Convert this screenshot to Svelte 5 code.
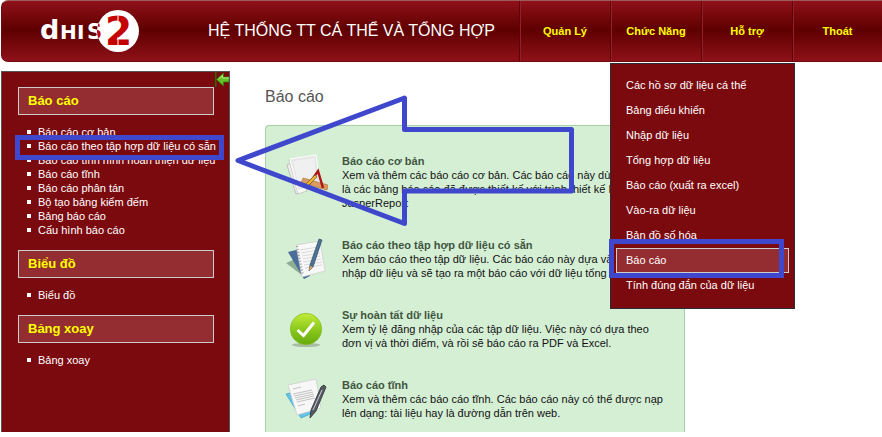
<script>
  const menu = ['Quản Lý', 'Chức Năng', 'Hỗ trợ', 'Thoát'];
  const functions = [
    'Các hồ sơ dữ liệu cá thể',
    'Bảng điểu khiển',
    'Nhập dữ liệu',
    'Tổng hợp dữ liệu',
    'Báo cáo (xuất ra excel)',
    'Vào-ra dữ liệu',
    'Bản đồ số hóa',
    'Báo cáo',
    'Tính đúng đắn của dữ liệu'
  ];
  const sections = [
    {
      title: 'Báo cáo',
      links: [
        'Báo cáo cơ bản',
        'Báo cáo theo tập hợp dữ liệu có sẵn',
        'Báo cáo tình hình hoàn thiện dữ liệu',
        'Báo cáo tĩnh',
        'Báo cáo phân tán',
        'Bộ tạo bảng kiểm đếm',
        'Bảng báo cáo',
        'Cấu hình báo cáo'
      ]
    },
    { title: 'Biểu đồ', links: ['Biểu đồ'] },
    { title: 'Bảng xoay', links: ['Bảng xoay'] }
  ];
  const reports = [
    {
      icon: 'design',
      title: 'Báo cáo cơ bản',
      lines: [
        'Xem và thêm các báo cáo cơ bản. Các báo cáo này dùng',
        'là các bảng báo cáo đã được thiết kế với trình thiết kế B',
        'JasperReport'
      ]
    },
    {
      icon: 'notebook',
      title: 'Báo cáo theo tập hợp dữ liệu có sẵn',
      lines: [
        'Xem báo cáo theo tập dữ liệu. Các báo cáo này dựa vào',
        'nhập dữ liệu và sẽ tạo ra một báo cáo với dữ liệu tổng h'
      ]
    },
    {
      icon: 'check',
      title: 'Sự hoàn tất dữ liệu',
      lines: [
        'Xem tỷ lệ đăng nhập của các tập dữ liệu. Việc này có dựa theo',
        'đơn vị và thời điểm, và rồi sẽ báo cáo ra PDF và Excel.'
      ]
    },
    {
      icon: 'document',
      title: 'Báo cáo tĩnh',
      lines: [
        'Xem và thêm các báo cáo tĩnh. Các báo cáo này có thể được nạp',
        'lên dạng: tài liệu hay là đường dẫn trên web.'
      ]
    }
  ];
</script>

<div class="page">
  <header>
    <a class="logo" href="#home" aria-label="DHIS 2">
      <svg width="104" height="48" viewBox="0 0 104 48">
        <defs>
          <clipPath id="disc"><circle cx="80" cy="24" r="21" /></clipPath>
        </defs>
        <g font-family="DejaVu Sans, sans-serif" font-weight="bold">
          <text x="2" y="32" font-size="27" fill="#fff">d</text>
          <text x="22" y="32" font-size="20" fill="#fff">H</text>
          <text x="39" y="32" font-size="20" fill="#fff">I</text>
          <text x="49" y="32" font-size="21" fill="#fff">S</text>
          <circle cx="80" cy="24" r="21" fill="#fff" />
          <text x="49" y="32" font-size="21" fill="#c00000" clip-path="url(#disc)">S</text>
          <text x="67" y="38" font-size="39" fill="#c50000">2</text>
        </g>
        <path d="M80 8v8M80 30v10" stroke="#fff" fill="none" />
      </svg>
    </a>
    <h1>HỆ THỐNG TT CÁ THỂ VÀ TỔNG HỢP</h1>
    <nav>
      {#each menu as label, i}
        <div class="tab">
          <a href="#menu">{label}</a>
          {#if i === 1}
            <ul class="dropdown">
              {#each functions as name}
                <li><a href="#function" class:active={name === 'Báo cáo'}>{name}</a></li>
              {/each}
            </ul>
          {/if}
        </div>
      {/each}
    </nav>
  </header>

  <div class="columns">
    <aside>
      <button class="collapse" aria-label="Ẩn">
        <svg width="14" height="15" viewBox="0 0 14 15">
          <path d="M.75 0v15" stroke="#2d6b00" stroke-width="1.5" />
          <path d="M1.500 7.500 8.500 1v4H14v5H8.500v4z" fill="#62c226" stroke="#2f7a08" stroke-width=".7" />
          <path d="M3.500 7 7.500 3.500V6H14" stroke="#b5ea80" fill="none" />
        </svg>
      </button>
      {#each sections as section}
        <section>
          <h2>{section.title}</h2>
          <ul>
            {#each section.links as link}
              <li><a href="#report">{link}</a></li>
            {/each}
          </ul>
        </section>
      {/each}
    </aside>

    <main>
      <h2>Báo cáo</h2>
      <div class="panel">
        {#each reports as report}
          <article>
            <svg width="42" height="42" viewBox="0 0 42 42">
              {#if report.icon === 'design'}
                <path d="m1 11 8-4 10 29-9 4z" fill="#eee" stroke="#aaa" stroke-width=".7" />
                <path d="m3 6 5-1 13 32-9 3z" fill="#f5f5f5" stroke="#bbb" stroke-width=".7" />
                <path d="m4 5 26-4 4 29-22 7z" fill="#e6e6e6" stroke="#fff" />
                <path d="m7 7 21-3 2 18-18 7z" fill="#f4f4f4" opacity=".7" />
                <path d="m17 24 25 7-1 5-26-7z" fill="#d99b62" stroke="#b57a45" stroke-width=".7" />
                <path d="m21 33 11-16 5 17" stroke="#b01818" stroke-width="2.500" fill="none" />
                <path d="m19 31 10-10 2 2-9 9-4 1z" fill="#f0b426" stroke="#6b5630" stroke-width=".7" />
              {:else if report.icon === 'notebook'}
                <path d="m0 25 14-6 10 17-7 2z" fill="#8fac94" />
                <path d="m2 14 12-3 10 27-6 3z" fill="#4a6d9a" />
                <path d="m10 7 24-4 5 30-23 6z" fill="#f8f8f8" stroke="#ccc" stroke-width=".7" />
                <path d="m14 12 18-3m-17 6 18-3m-17 6 18-3m-17 6 17-3m-17 6 18-3m-17 6 18-3m-17 6 17-3" stroke="#d0d0d0" stroke-width=".8" />
                <path d="m11 8 6 29" stroke="#999" stroke-width="2" stroke-dasharray="1 2" />
                <path d="m33 1 3 1-9 27-4 4 1-6z" fill="#4b7193" stroke="#345069" stroke-width=".7" />
                <path d="m24 28 3 1-4 4z" fill="#e2a25f" />
              {:else if report.icon === 'check'}
                <defs>
                  <linearGradient id="green" x1="0" y1="0" x2="0" y2="1">
                    <stop offset="0" stop-color="#c3ec3a" />
                    <stop offset=".5" stop-color="#8cca1d" />
                    <stop offset="1" stop-color="#65a90b" />
                  </linearGradient>
                </defs>
                <ellipse cx="20" cy="37" rx="14" ry="2" fill="#a8bca4" />
                <circle cx="20" cy="21" r="15.700" fill="url(#green)" stroke="#82bb20" stroke-width=".7" />
                <path d="m11.500 22 6 5.500L28 14.500" fill="none" stroke="#fff" stroke-width="3" />
              {:else}
                <path d="m0 16 16-4 13 22-14 6z" fill="#65c4e8" stroke="#3b9fca" stroke-width=".7" />
                <path d="m2 7 28-6 5 29-24 7z" fill="#f7f7f7" stroke="#ccc" stroke-width=".7" />
                <path d="m7 11 8-2m-8 7 19-4m-18 6 19-4m-18 6 19-4m-18 6 18-4m-17 6 18-4m-17 8 7-2" stroke="#c2c2c2" />
                <path d="m38 7 2 2-10 24-6 7 1-8 10-23z" fill="#565b63" stroke="#292c31" stroke-width=".8" />
                <path d="m36 12-9 20" stroke="#cbd0d4" />
              {/if}
            </svg>
            <div>
              <h3>{report.title}</h3>
              {#each report.lines as line}
                <p>{line}</p>
              {/each}
            </div>
          </article>
        {/each}
      </div>
    </main>
  </div>

  <svg class="marks" width="800" height="300" viewBox="0 0 800 300" aria-hidden="true">
    <g fill="none" stroke="#3f48cc" stroke-width="5">
      <path d="M17.500 137.500h204v20h-204z" />
      <path d="M611.500 241.500h170v34h-170z" />
      <path d="M238 160.500 404.500 98v31.500h167v61.500h-167v32.500z" stroke-linejoin="round" />
    </g>
  </svg>
</div>

<style>
  :global(body) {
    margin: 0;
    background: #fff;
  }
  .page {
    position: relative;
    overflow: hidden;
    font: 11px/14px 'Liberation Sans', Arial, sans-serif;
  }
  h1,
  h2,
  h3,
  p,
  ul {
    margin: 0;
    padding: 0;
  }
  ul {
    list-style: none;
  }
  a {
    color: inherit;
    text-decoration: none;
  }
  header {
    display: flex;
    align-items: center;
    box-sizing: border-box;
    height: 62px;
    margin-left: 1px;
    border: solid #6d0a10;
    border-width: 1px 0 1px 1px;
    border-top-color: #9c5a5e;
    border-radius: 7px 0 0 7px;
    background: linear-gradient(#8f1119, #5e0000 48%, #8f1119);
  }
  .logo {
    display: flex;
    width: 170px;
    padding-left: 36px;
  }
  h1 {
    color: #fff;
    font-size: 16px;
    font-weight: normal;
    line-height: 20px;
    white-space: nowrap;
  }
  nav {
    display: flex;
    align-self: stretch;
    margin-left: auto;
  }
  .tab {
    position: relative;
    display: flex;
    align-items: center;
    justify-content: center;
    box-sizing: border-box;
    width: 91px;
    border-left: 1px solid #5a0408;
    box-shadow: inset 1px 0 #961f27;
    color: #ff0;
    font-weight: bold;
  }
  .tab:last-child {
    width: 90px;
  }
  .dropdown {
    position: absolute;
    z-index: 1;
    top: 62px;
    left: -1px;
    box-sizing: border-box;
    width: 185px;
    padding: 9px 5px 10px;
    border: 1px solid #2b2b33;
    background: #7b0a0f;
    color: #fff;
    font-weight: normal;
  }
  .dropdown a {
    display: block;
    box-sizing: border-box;
    height: 25px;
    padding: 0 9px;
    border: 1px solid transparent;
    line-height: 23px;
    white-space: nowrap;
  }
  .dropdown a.active {
    border-color: #ccc;
    background: #942d31;
  }
  .columns {
    display: flex;
    margin-top: 9px;
  }
  aside {
    position: relative;
    flex: none;
    box-sizing: border-box;
    width: 229px;
    margin-left: 1px;
    padding: 15px 15px 0 16px;
    border: solid #555;
    border-width: 1px 1px 0;
    background: #7b0a0f;
    color: #fff;
  }
  .collapse {
    position: absolute;
    top: 0;
    right: 0;
    display: flex;
    padding: 0;
    border: 0;
    background: none;
  }
  aside h2 {
    padding: 0 9px;
    border: 1px solid #ccc;
    background: #942d31;
    color: #ff0;
    font-size: 13px;
    line-height: 26px;
  }
  aside ul {
    padding: 10px 0 13px 9px;
  }
  aside li {
    display: flex;
    align-items: center;
    gap: 7px;
    white-space: nowrap;
  }
  aside li::before {
    flex: none;
    width: 4px;
    height: 4px;
    background: #fff;
    content: '';
  }
  main {
    flex: 1;
    min-width: 0;
    padding: 16px 35px 0;
  }
  main h2 {
    color: #555;
    font-size: 16px;
    font-weight: normal;
    line-height: 20px;
  }
  .panel {
    display: flex;
    flex-direction: column;
    gap: 28px;
    box-sizing: border-box;
    max-width: 420px;
    margin-top: 18px;
    padding: 28px 20px 12px;
    border: solid #a5d3a5;
    border-width: 1px 1px 0;
    border-radius: 4px 4px 0 0;
    background: #d5efd5;
  }
  article {
    display: flex;
    gap: 14px;
  }
  article svg {
    flex: none;
  }
  article p {
    color: #111;
    white-space: nowrap;
  }
  h3 {
    color: #3f5640;
    font-size: 11px;
    line-height: 14px;
  }
  .marks {
    position: absolute;
    z-index: 2;
    top: 0;
    left: 0;
    pointer-events: none;
  }
</style>
